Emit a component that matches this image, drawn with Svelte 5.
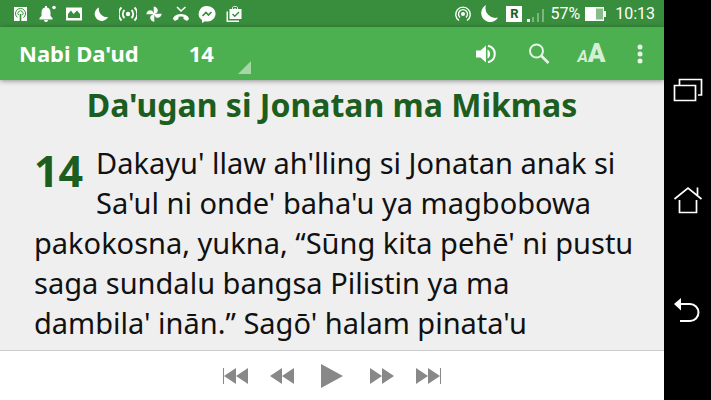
<script>
	const book = "Nabi Da'ud";
	const chapter = 14;
	const heading = "Da'ugan si Jonatan ma Mikmas";
	// non-breaking space keeps "dambila' inān" on one line
	const verse =
		"Dakayu' llaw ah'lling si Jonatan anak si Sa'ul ni onde' baha'u ya magbobowa pakokosna, yukna, “Sūng kita pehē' ni pustu saga sundalu bangsa Pilistin ya ma dambila'\u00a0inān.” Sagō' halam pinata'u";

	const controls = [
		{ label: "Previous chapter", width: 28, d: "M1 0h1v16H1zM14 0v16L2 8zM26 0v16L14 8z" },
		{ label: "Rewind", width: 26, d: "M13 0v16L1 8zM25 0v16L13 8z" },
		{ label: "Play", width: 22, play: true, d: "M0 0v24l22-12z" },
		{ label: "Forward", width: 26, d: "M1 0v16l12-8zM13 0v16l12-8z" },
		{ label: "Next chapter", width: 28, d: "M26 0h1v16h-1zM2 0v16l12-8zM14 0v16l12-8z" },
	];
</script>

<div class="device">
	<div class="screen">
		<div class="status">
			<div class="notifications">
				<svg viewBox="0 0 18 18">
					<path fill="#fff" fill-rule="evenodd" d="M2 2h13v14H2z" />
					<g fill="none" stroke="#388e3c">
						<path d="M5.5 12.5a5 5 0 1 1 6 0" />
						<path d="M6.6 10.2a2.6 2.6 0 1 1 3.8 0" />
						<path d="M8.5 9v7" stroke-width="1.6" />
					</g>
				</svg>
				<svg viewBox="0 0 18 18" fill="#fff">
					<path d="M0.500 14.500v-1.500L2.500 11V7.500c0-3 1.500-4.500 3.500-5V1h2v1.500c2 .5 3.500 2 3.500 5V11l2 2v1.500zM5 15h4a2 2 0 0 1-4 0z" />
					<circle cx="15" cy="2.500" r="1.800" />
				</svg>
				<svg viewBox="0 0 18 18">
					<path fill="#fff" d="M1 2.500h16v13H1z" />
					<path fill="#388e3c" d="M3 13V9l3-3.500L8.500 9 12 5.500 15 9v4z" />
				</svg>
				<svg viewBox="0 0 18 18" fill="#fff">
					<path d="M7 2.500A7 7 0 1 0 16 12 8 8 0 0 1 7 2.500z" />
				</svg>
				<svg viewBox="0 0 18 18" fill="none" stroke="#fff" stroke-width="1.800">
					<circle cx="9" cy="9" r="2.200" fill="#fff" stroke="none" />
					<path d="M5.500 5a5.500 5.500 0 0 0 0 8M12.500 5a5.500 5.500 0 0 1 0 8M2.500 2.500a9 9 0 0 0 0 13M15.500 2.500a9 9 0 0 1 0 13" />
				</svg>
				<svg viewBox="0 0 18 18" fill="#fff">
					<path d="M8.700 9.300V1.500c3.500.5 5 3.500 3.500 6zM8.700 8.700h8c-.5 3.500-3.500 5-6 3.500zM9.300 8.700v8c-3.500-.5-5-3.500-3.500-6zM9.300 9.300h-8c.5-3.500 3.500-5 6-3.500z" />
				</svg>
				<svg viewBox="0 0 18 18">
					<path fill="none" stroke="#fff" stroke-width="1.600" d="M5 2l4 4 4.500-4" />
					<path fill="#fff" d="M1 14c0-2 3-5 8-5s8 3 8 5l-2 2-3.500-2v-2.200a9 9 0 0 0-5 0V14L3 16z" />
				</svg>
				<svg viewBox="0 0 18 18">
					<path fill="#fff" d="M9 1a8.300 7.800 0 0 0-5 14v3l3-1.700A8.300 7.800 0 1 0 9 1z" />
					<path fill="none" stroke="#388e3c" stroke-width="1.600" d="M4.500 11l3.500-3.500 2.500 2.500L13.500 7" />
				</svg>
				<svg viewBox="0 0 18 18">
					<path fill="#fff" d="M4.500 4H7V2.500L8.500 1h3L13 2.500V4h3.500v10h-12zM1.500 6.500H3v9h11V17H1.500z" />
					<path fill="none" stroke="#388e3c" stroke-width="1.400" d="M8.500 4V2.500h3V4M7.500 9l2.300 2.300L14 7" />
				</svg>
			</div>

			<div class="system">
				<svg viewBox="0 0 18 18" fill="none" stroke="#fff" stroke-width="1.400">
					<circle cx="9" cy="9" r="2" fill="#fff" stroke="none" />
					<path d="M5 15.500a7.300 7.300 0 1 1 8 0M6 12.500a4.500 4.500 0 1 1 6 0" />
				</svg>
				<svg viewBox="0 0 18 18" class="moon" fill="#fff">
					<path d="M6 0A9 9 0 1 0 18 12.500 9.800 9.800 0 0 1 6 0z" />
				</svg>
				<span class="roaming">R</span>
				<svg viewBox="0 0 18 18" class="signal" fill="#fff">
					<path d="M0 14h3v3H0z" />
					<path opacity=".35" d="M5 12h2v5H5zM10 8h2v9h-2zM15 4h2v13h-2z" />
				</svg>
				<span>57%</span>
				<svg viewBox="0 0 22 18" class="battery" fill="#fff">
					<path d="M0 2h19v4h2v6h-2v4H0z" />
					<path fill="#388e3c" opacity=".6" d="M11 3.500h7v11h-7z" />
				</svg>
				<span class="clock">10:13</span>
			</div>
		</div>

		<header>
			<button class="book">{book}</button>
			<button class="chapter" aria-haspopup="listbox">{chapter}</button>
			<div class="actions">
				<button aria-label="Audio">
					<svg viewBox="0 0 22 22" fill="#fff">
						<path d="M1 7.500h4.500L11 2.500v17l-5.500-5H1zM12.500 6.500c3.500 1.500 3.500 7.500 0 9z" />
						<path fill="none" stroke="#fff" stroke-width="2" d="M13 2.800c9 2 9 14.400 0 16.400" />
					</svg>
				</button>
				<button aria-label="Search">
					<svg viewBox="0 0 22 22" fill="none" stroke="#e8f5e9" stroke-width="2">
						<circle cx="8.500" cy="8" r="6.500" />
						<path stroke-width="2.600" d="M13 12.500l7.500 7.500" />
					</svg>
				</button>
				<button class="text-size" aria-label="Text size"><i>A</i><b>A</b></button>
				<button class="more" aria-label="More options">
					<svg viewBox="0 0 22 22" fill="#e8f5e9">
						<circle cx="11" cy="4" r="2.500" />
						<circle cx="11" cy="11" r="2.500" />
						<circle cx="11" cy="18" r="2.500" />
					</svg>
				</button>
			</div>
		</header>

		<main>
			<h1>{heading}</h1>
			<p><span class="number">{chapter}</span>{verse}</p>
		</main>

		<footer>
			{#each controls as control}
				<button class:play={control.play} aria-label={control.label}>
					<svg
						viewBox="0 0 {control.width} {control.play ? 24 : 16}"
						width={control.width}
						height={control.play ? 24 : 16}
						fill="#888"
					>
						<path d={control.d} />
					</svg>
				</button>
			{/each}
		</footer>
	</div>

	<nav>
		<button aria-label="Recent apps">
			<svg viewBox="0 0 30 30" fill="none" stroke="#fff" stroke-width="1.700">
				<path d="M1.500 10.500h21v15h-21zM6.500 10V4.500h22v15.500h-3.500" />
			</svg>
		</button>
		<button aria-label="Home">
			<svg viewBox="0 0 30 30" fill="none" stroke="#fff" stroke-width="1.700">
				<path d="M1.500 14L15 3l13.500 11M6.500 15v12.500h17V15M24.500 10V2.500" />
			</svg>
		</button>
		<button aria-label="Back">
			<svg viewBox="0 0 30 30" fill="none" stroke="#fff" stroke-width="2">
				<path d="M5 9h12a8.500 8.500 0 0 1 0 17H7" />
				<path fill="#fff" stroke="none" d="M1 9L8 3v12.500z" />
			</svg>
		</button>
	</nav>
</div>

<style>
	:global(body) {
		margin: 0;
	}
	.device {
		display: flex;
		height: 100vh;
		background: #000;
		font-family: "Noto Sans", sans-serif;
	}
	.screen {
		flex: 1;
		min-width: 0;
		display: flex;
		flex-direction: column;
		background: #efefef;
	}
	button {
		display: flex;
		align-items: center;
		justify-content: center;
		padding: 0;
		border: none;
		background: none;
		color: #fff;
		font-family: inherit;
		cursor: pointer;
	}

	.status {
		display: flex;
		justify-content: space-between;
		align-items: center;
		height: 27px;
		padding: 0 9px 0 12px;
		background: #388e3c;
		color: #fff;
		font-family: Roboto, sans-serif;
		font-size: 16px;
	}
	.status svg {
		width: 18px;
		height: 18px;
	}
	.notifications {
		display: flex;
		justify-content: space-between;
		width: 231px;
	}
	.system {
		display: flex;
		align-items: center;
		gap: 5px;
		line-height: 29px;
	}
	.system .moon {
		margin: 0 3px;
	}
	.system .battery {
		width: 22px;
	}
	.roaming {
		width: 16px;
		background: #fff;
		color: #1b5e20;
		font-size: 13px;
		font-weight: 700;
		line-height: 16px;
		text-align: center;
	}
	.clock {
		margin-left: 3px;
	}

	header {
		display: flex;
		height: 53px;
		background: #4caf50;
		box-shadow: 0 1px 5px rgba(0, 0, 0, 0.4);
		z-index: 1;
	}
	.book,
	.chapter {
		padding-bottom: 2px;
		font-size: 22px;
		font-weight: 700;
	}
	.book {
		padding-left: 19px;
	}
	.chapter {
		position: relative;
		justify-content: flex-start;
		width: 62px;
		margin-left: 50px;
	}
	.chapter::after {
		content: "";
		position: absolute;
		right: 0;
		bottom: 6px;
		border-left: 13px solid transparent;
		border-bottom: 13px solid #a5d7a7;
	}
	.actions {
		display: flex;
		margin-left: auto;
		padding-right: 2px;
	}
	.actions button {
		width: 53px;
	}
	.actions svg {
		width: 22px;
		height: 22px;
	}
	.actions .more {
		width: 44px;
	}
	.actions .text-size {
		align-items: baseline;
		color: #d5efd6;
		font-family: Roboto, sans-serif;
		font-weight: 700;
		line-height: 53px;
	}
	.text-size i {
		font-size: 16px;
	}
	.text-size b {
		font-size: 26px;
		font-weight: 900;
	}

	main {
		flex: 1;
		min-height: 0;
		padding: 0 24px;
		overflow: hidden;
	}
	h1 {
		margin: 4px 0 17px;
		color: #1b5e20;
		font-size: 32px;
		line-height: 42px;
		text-align: center;
	}
	p {
		margin: 0;
		padding-left: 10px;
		color: #111;
		font-size: 29px;
		line-height: 40px;
	}
	.number {
		float: left;
		width: 62px;
		color: #1b5e20;
		font-size: 43px;
		font-weight: 700;
		line-height: 56px;
	}

	footer {
		display: flex;
		justify-content: center;
		height: 49px;
		border-top: 1px solid #ccc;
		background: #fff;
	}
	footer button {
		width: 46px;
	}
	footer .play {
		width: 54px;
	}

	nav {
		display: flex;
		flex-direction: column;
		justify-content: space-between;
		width: 47px;
		padding: 60px 0;
		box-sizing: border-box;
	}
	nav button {
		height: 60px;
	}
	nav svg {
		width: 30px;
		height: 30px;
	}
</style>
